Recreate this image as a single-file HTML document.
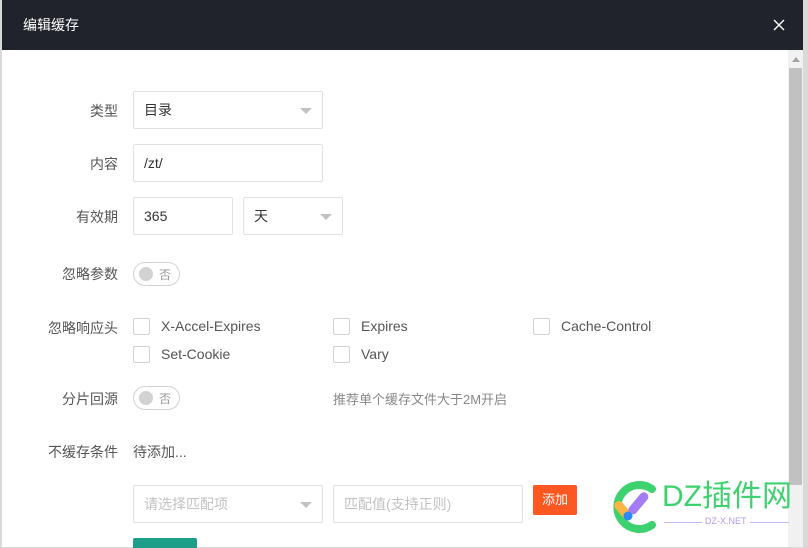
<!DOCTYPE html>
<html><head><meta charset="utf-8"><style>
*{margin:0;padding:0;box-sizing:border-box}
body{width:808px;height:547px;overflow:hidden;background:#d9d9d9;font-family:"Liberation Sans","Noto Sans CJK SC",sans-serif;font-size:14px;color:#555;position:relative}
.m{position:absolute;left:2px;top:0px;width:801px;height:547px;background:#fff}
.hd{position:absolute;left:0;top:0;width:801px;height:50px;background:#20232b;color:#fff;font-size:14px;line-height:50px;padding-left:21px}
.a{position:absolute}
.lb{position:absolute;text-align:right;width:116px;left:0;color:#555}
.in{position:absolute;border:1px solid #e1e1e1;border-radius:2px;background:#fff;color:#333;padding-left:10px}
.tri{position:absolute;right:10px;top:16px;width:0;height:0;border-left:6px solid transparent;border-right:6px solid transparent;border-top:6px solid #c2c2c2}
.sw{position:absolute;width:47px;height:24px;border:1px solid #d2d2d2;border-radius:12px}
.sw i{position:absolute;left:5px;top:4px;width:14px;height:14px;border-radius:50%;background:#d2d2d2}
.sw span{position:absolute;left:25px;top:3px;font-size:12px;color:#999}
.cb{position:absolute;width:17px;height:17px;border:1px solid #d2d2d2;border-radius:2px}
.ct{position:absolute;color:#555}
</style></head><body>
<div class="m">
<div class="hd">编辑缓存
<svg class="a" style="left:771px;top:19px" width="12" height="12" viewBox="0 0 12 12"><path d="M1 1L11 11M11 1L1 11" stroke="#fff" stroke-width="1.4"/></svg>
</div>
<div class="a" style="left:786px;top:50px;width:15px;height:497px;background:#f1f1f1"></div>
<div class="a" style="left:787px;top:68px;width:13px;height:417px;background:#c1c1c1"></div>
<div class="a" style="left:790px;top:57px;border-left:4px solid transparent;border-right:4px solid transparent;border-bottom:5px solid #a3a3a3"></div>

<div class="lb" style="top:101px">类型</div>
<div class="in" style="left:131px;top:91px;width:190px;height:38px;line-height:36px">目录<div class="tri"></div></div>
<div class="lb" style="top:154px">内容</div>
<div class="in" style="left:131px;top:144px;width:190px;height:38px;line-height:36px">/zt/</div>
<div class="lb" style="top:207px">有效期</div>
<div class="in" style="left:131px;top:197px;width:100px;height:38px;line-height:36px">365</div>
<div class="in" style="left:241px;top:197px;width:100px;height:38px;line-height:36px">天<div class="tri"></div></div>

<div class="lb" style="top:264px">忽略参数</div>
<div class="sw" style="left:131px;top:262px"><i></i><span>否</span></div>

<div class="lb" style="top:318px">忽略响应头</div>
<div class="cb" style="left:131px;top:318px"></div><div class="ct" style="left:159px;top:318px">X-Accel-Expires</div>
<div class="cb" style="left:331px;top:318px"></div><div class="ct" style="left:359px;top:318px">Expires</div>
<div class="cb" style="left:531px;top:318px"></div><div class="ct" style="left:559px;top:318px">Cache-Control</div>
<div class="cb" style="left:131px;top:346px"></div><div class="ct" style="left:159px;top:346px">Set-Cookie</div>
<div class="cb" style="left:331px;top:346px"></div><div class="ct" style="left:359px;top:346px">Vary</div>

<div class="lb" style="top:389px">分片回源</div>
<div class="sw" style="left:131px;top:386px"><i></i><span>否</span></div>
<div class="ct" style="left:331px;top:389px;color:#888;font-size:13px">推荐单个缓存文件大于2M开启</div>

<div class="lb" style="top:442px">不缓存条件</div>
<div class="ct" style="left:131px;top:442px">待添加...</div>
<div class="in" style="left:131px;top:485px;width:190px;height:38px;line-height:36px;color:#c2c2c2">请选择匹配项<div class="tri"></div></div>
<div class="in" style="left:331px;top:485px;width:190px;height:38px;line-height:36px;color:#c2c2c2">匹配值(支持正则)</div>
<div class="a" style="left:531px;top:485px;width:44px;height:30px;background:#ff5722;color:#fff;font-size:13px;line-height:30px;text-align:center;border-radius:2px">添加</div>
<div class="a" style="left:131px;top:538px;width:64px;height:10px;background:#1e9e88;border-radius:2px 2px 0 0"></div>

<svg class="a" style="left:606px;top:480px" width="52" height="54" viewBox="0 0 52 54">
<path d="M44 9 A22 22 0 1 0 44 45" fill="none" stroke="#3dd16f" stroke-width="8" stroke-linecap="round"/>
<rect x="10" y="20" width="9" height="20" rx="4.5" fill="#fcb445" transform="rotate(-40 14 30)"/>
<rect x="26" y="10" width="9" height="26" rx="4.5" fill="#a57cf7" transform="rotate(40 30 23)"/>
<circle cx="20" cy="36" r="4.5" fill="#2b8bf7"/>
</svg>
<div class="a" style="left:660px;top:479px;font-size:30px;color:#3dd16f;line-height:36px">DZ插件网</div>
<div class="a" style="left:662px;top:522px;width:125px;height:1px;background:#c9b6f7"></div>
<div class="a" style="left:700px;top:516px;font-size:9px;color:#b49af0;background:#fff;padding:0 3px">DZ-X.NET</div>
</div>
</body></html>
